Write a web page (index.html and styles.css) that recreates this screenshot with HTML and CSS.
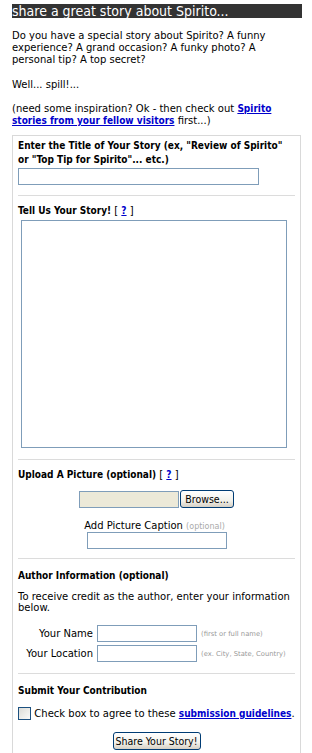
FILE: index.html
```html
<!DOCTYPE html>
<html>
<head>
<meta charset="utf-8">
<link rel="stylesheet" href="styles.css">
</head>
<body>
<div class="page">
  <h1 class="banner">share a great story about Spirito...</h1>
  <p class="intro">Do you have a special story about Spirito? A funny experience? A grand occasion? A funky photo? A personal tip? A top secret?</p>
  <p class="intro">Well... spill!...</p>
  <p class="intro">(need some inspiration? Ok - then check out <a href="#" class="link">Spirito stories from your fellow visitors</a> first...)</p>

  <form class="box">
    <div class="sec sec-title">
      <div class="head title-head">Enter the Title of Your Story (ex, "Review of Spirito" or "Top Tip for Spirito"... etc.)</div>
      <input type="text" class="field title-field">
    </div>

    <div class="sec sec-story">
      <div class="head">Tell Us Your Story! <span class="bracket">[ <a href="#" class="link">?</a> ]</span></div>
      <textarea class="story"></textarea>
    </div>

    <div class="sec sec-upload">
      <div class="head">Upload A Picture (optional) <span class="bracket">[ <a href="#" class="link">?</a> ]</span></div>
      <div class="file-row">
        <span class="file-path"></span>
        <button type="button" class="btn browse">Browse...</button>
      </div>
      <div class="caption-label">Add Picture Caption <span class="opt">(optional)</span></div>
      <div class="caption-row"><input type="text" class="field caption-field"></div>
    </div>

    <div class="sec sec-author">
      <div class="head">Author Information (optional)</div>
      <p class="author-note">To receive credit as the author, enter your information below.</p>
      <div class="author-grid">
        <span class="lbl">Your Name</span>
        <input type="text" class="field author-field">
        <span class="hint">(first or full name)</span>
        <span class="lbl">Your Location</span>
        <input type="text" class="field author-field">
        <span class="hint">(ex. City, State, Country)</span>
      </div>
    </div>

    <div class="sec sec-submit">
      <div class="head">Submit Your Contribution</div>
      <div class="agree-row">
        <span class="checkbox"></span>
        <span class="agree-text">Check box to agree to these <a href="#" class="link">submission guidelines</a>.</span>
      </div>
      <div class="submit-row">
        <button type="button" class="btn share">Share Your Story!</button>
      </div>
    </div>
  </form>
</div>
</body>
</html>
```

FILE: styles.css
```css
html, body {
  margin: 0;
  padding: 0;
  background: #fff;
}

body {
  font-family: "DejaVu Sans", Verdana, sans-serif;
  font-size: 10px;
  color: #000;
}

.page {
  padding: 4px 10px 0 12px;
  width: 290px;
}

.banner {
  margin: 0;
  background: #333;
  color: #fff;
  font-family: "DejaVu Sans Condensed", "DejaVu Sans", sans-serif;
  font-weight: normal;
  font-size: 14px;
  line-height: 14px;
  height: 14px;
  white-space: nowrap;
  overflow: hidden;
}

.intro {
  margin: 12px 0 0;
  width: 284px;
  line-height: 12.2px;
}

.link {
  color: #0000cc;
  font-family: "DejaVu Sans Condensed", "DejaVu Sans", sans-serif;
  font-weight: bold;
  text-decoration: underline;
}

.box {
  margin-top: 8px;
  border: 1px solid #d9d9d9;
  border-bottom: none;
  width: 287px;
  min-height: 640px;
}

.sec {
  margin: 0 5px;
  border-bottom: 1px solid #dcdcdc;
}

.head {
  font-family: "DejaVu Sans Condensed", "DejaVu Sans", sans-serif;
  font-weight: bold;
  line-height: 14px;
}

.title-head {
  width: 274px;
}

.bracket {
  font-family: "DejaVu Sans", sans-serif;
  font-weight: normal;
}

.field {
  display: block;
  box-sizing: border-box;
  margin: 0;
  padding: 0 2px;
  border: 1px solid #7f9db9;
  background: #fff;
  font: inherit;
}

.sec-title {
  padding: 3px 0 10px;
}

.title-field {
  margin-top: 1px;
  width: 241px;
  height: 17px;
}

.sec-story {
  padding: 8px 0 11px;
}

.story {
  display: block;
  box-sizing: border-box;
  margin: 2px 0 0 3px;
  width: 266px;
  height: 228px;
  border: 1px solid #7f9db9;
  resize: none;
  padding: 0;
}

.sec-upload {
  padding: 8px 0 9px;
}

.file-row {
  display: flex;
  justify-content: center;
  align-items: center;
  gap: 1px;
  margin-top: 8px;
  height: 18px;
}

.file-path {
  box-sizing: border-box;
  width: 100px;
  height: 17px;
  background: #ece9d8;
  border: 1px solid #7f9db9;
}

.btn {
  box-sizing: border-box;
  margin: 0;
  padding: 0;
  border: 1px solid #003c74;
  border-radius: 3px;
  background: linear-gradient(#ffffff, #f2f1ea 60%, #d6d0c5);
  font-family: "DejaVu Sans Condensed", "Liberation Sans", sans-serif;
  font-size: 10.5px;
  color: #000;
  line-height: 1;
}

.browse {
  width: 54px;
  height: 18px;
}

.caption-label {
  margin-top: 12px;
  text-align: center;
  line-height: 11px;
  padding-right: 4px;
}

.opt {
  color: #aaa;
  font-size: 8px;
}

.caption-row {
  display: flex;
  justify-content: center;
}

.caption-field {
  width: 140px;
  height: 17px;
}

.sec-author {
  padding: 10px 0 11px;
}

.author-note {
  margin: 8px 0 0;
  line-height: 11px;
}

.author-grid {
  display: grid;
  grid-template-columns: 75px 100px auto;
  column-gap: 4px;
  row-gap: 3px;
  align-items: center;
  margin-top: 12px;
}

.lbl {
  text-align: right;
}

.author-field {
  width: 100px;
  height: 17px;
}

.hint {
  color: #999;
  font-size: 6.8px;
  white-space: nowrap;
}

.sec-submit {
  border-bottom: none;
  padding: 10px 0 0;
}

.agree-row {
  display: flex;
  justify-content: center;
  align-items: center;
  gap: 3px;
  margin-top: 9px;
  white-space: nowrap;
}

.checkbox {
  box-sizing: border-box;
  width: 13px;
  height: 13px;
  border: 1px solid #1c5180;
  background: linear-gradient(135deg, #dcdcd7, #fbfbf9);
}

.submit-row {
  display: flex;
  justify-content: center;
  margin-top: 12px;
}

.share {
  width: 88px;
  height: 18px;
}
```
